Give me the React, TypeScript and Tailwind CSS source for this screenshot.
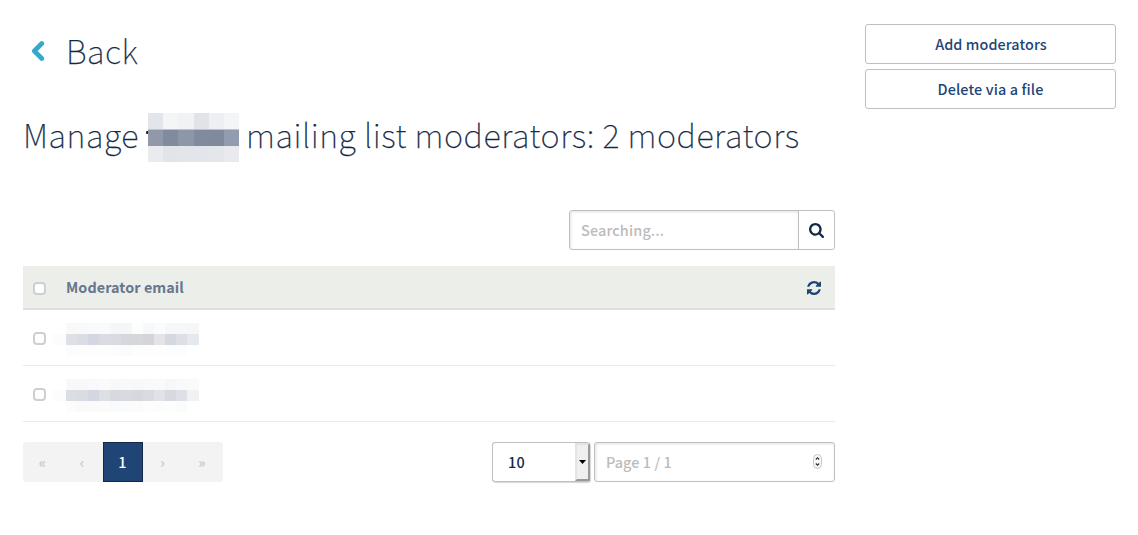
import React from "react";

const headingMosaic = [
  ["#e2e6ea", "#f3f5f7", "#f1f2f5", "#e2e3e8", "#eeeff3", "#f3f5f7"],
  ["#9098a9", "#808b9d", "#8e97a8", "#818b9e", "#808a9c", "#939cae"],
  ["#e9ebef", "#e1e4e9", "#e4e5ea", "#e2e5ea", "#e3e7ea", "#e8eaee"],
];

const rowMosaics = [
  [
    ["#f9f9fa", "#f8f9fa", "#fafafb", "#f9fafb", "#f5f6f8", "#f5f6f8", "#fcfefe", "#f7f8f9", "#fafbfb", "#f6f7f8", "#f6f7f9", "#f5f6f8"],
    ["#dde0e5", "#dadde3", "#d4d7e1", "#d9dce2", "#d9dbe0", "#d5d7db", "#d6d7db", "#d3d5db", "#e3e3e8", "#d5d7e1", "#dcdfe6", "#e5e9ed"],
    ["#fbfdfd", "#fcfefe", "#fdfdfd", "#fcfdfd", "#fafcfd", "#f9fbfd", "#fcfdfd", "#fdfdfd", "#fefefe", "#fcfdfd", "#fcfefe", "#ffffff"],
  ],
  [
    ["#f8f8f9", "#f8f8fa", "#f8f9fa", "#fafafa", "#f7f8fa", "#f9f9fa", "#f7f8f9", "#f8f9fa", "#fafafa", "#f6f7f9", "#f8f9fa", "#fafafb"],
    ["#dadde2", "#d9dce2", "#d4d7e1", "#dcdfe4", "#d6d9de", "#d8dadf", "#d6d8dc", "#d9dbe0", "#e1e2e8", "#d6d9df", "#dde0e7", "#f0f1f3"],
    ["#fcfcfc", "#fafafa", "#fafafb", "#fbfbfb", "#f9fafb", "#fbfbfc", "#fbfbfb", "#fdfdfd", "#fcfcfd", "#fcfdfd", "#fafbfb", "#ffffff"],
  ],
];

function Checkbox() {
  return <span className="block h-[13px] w-[13px] shrink-0 rounded-[4px] border-2 border-[#cfcfcf] bg-white" />;
}

function Mosaic({ rows }: { rows: string[][] }) {
  return (
    <div className="flex flex-col pt-px">
      {rows.map((row, i) => (
        <div key={i} className="flex h-[11px]">
          <span className={i === 1 ? "w-[14px] bg-[#fcfcfd]" : "w-[14px]"} />
          {row.map((c, j) => (
            <span key={j} className={j % 12 === 11 ? "w-[12px]" : "w-[11px]"} style={{ backgroundColor: c }} />
          ))}
        </div>
      ))}
    </div>
  );
}

function SearchIcon() {
  return (
    <svg viewBox="64 128 1664 1664" className="h-[15px] w-[15px]" fill="#122844">
      <path d="M1216 832q0-185-131.5-316.5t-316.5-131.5-316.5 131.5-131.5 316.5 131.5 316.5 316.5 131.5 316.5-131.5 131.5-316.5zm512 832q0 52-38 90t-90 38q-54 0-90-38l-343-342q-179 124-399 124-143 0-273.5-55.5t-225-150-150-225-55.5-273.5 55.5-273.5 150-225 225-150 273.5-55.5 273.5 55.5 225 150 150 225 55.5 273.5q0 220-124 399l343 343q37 37 37 90z" />
    </svg>
  );
}

function RefreshIcon() {
  return (
    <svg viewBox="0 0 1536 1536" className="mt-[2px] h-[14px] w-[14px]" fill="#1f4577">
      <path d="M1511 928q0 5-1 7-64 268-268 434.5t-478 166.5q-146 0-282.5-55t-243.5-157l-129 129q-19 19-45 19t-45-19-19-45v-448q0-26 19-45t45-19h448q26 0 45 19t19 45-19 45l-137 137q71 66 161 102t187 36q134 0 250-65t186-179q11-17 53-117 8-23 30-23h192q13 0 22.5 9.5t9.5 22.5zm25-800v448q0 26-19 45t-45 19h-448q-26 0-45-19t-19-45 19-45l138-138q-148-137-349-137-134 0-250 65t-186 179q-11 17-53 117-8 23-30 23h-199q-13 0-22.5-9.5t-9.5-22.5v-7q65-268 270-434.5t480-166.5q146 0 284 55.5t245 156.5l130-129q19-19 45-19t45 19 19 45z" />
    </svg>
  );
}

export default function App() {
  return (
    <div className="flex h-[535px] w-[1138px] gap-[30px] bg-white pl-[23px] font-['Noto_Sans_CJK_SC',sans-serif] text-[14.4px] font-medium tracking-[0.06px] text-[#122844]">
      <main className="w-[812px] shrink-0">
        <a className="mt-[30px] flex h-[40px] items-center">
          <svg viewBox="0 0 14 22" className="mt-[2px] ml-[8px] h-[22px] w-[14px]" fill="none" stroke="#33a9cb" strokeWidth="4.6" strokeLinecap="round" strokeLinejoin="round">
            <path d="M10.8 3.5 3.3 11l7.5 7.5" />
          </svg>
          <span className="ml-[21px] text-[32.5px] leading-[40px] font-thin tracking-[0.54px] [-webkit-text-stroke:0.25px_#122844]">Back</span>
        </a>
        <h1 className="mt-[43px] flex h-[49px] items-start text-[32.5px] leading-[42px] font-thin tracking-[0.54px] whitespace-nowrap [-webkit-text-stroke:0.25px_#122844]">
          <span className="w-[123px]">Manage</span>
          <span className="mt-[18px] h-[3px] w-[2px] rounded-l-[1px] bg-[#122844]" />
          <span className="flex w-[91px] flex-col">
            {headingMosaic.map((row, i) => (
              <span key={i} className={i === 1 ? "flex h-[17px] border-t border-[#bcc3cc]" : "flex h-[16px]"}>
                {row.map((c, j) => (
                  <span key={j} className="flex-1" style={{ backgroundColor: c }} />
                ))}
              </span>
            ))}
          </span>
          <span className="ml-[7px]">mailing list moderators: 2 moderators</span>
        </h1>

        <div className="mt-[48px] flex justify-end">
          <div className="flex h-[40px] w-[266px] rounded-[3px] border border-[#bfbfbf]">
            <div className="flex flex-1 items-center pl-[11px] tracking-[0.15px] text-[#bbb] shadow-[inset_1px_1px_3px_#e0e0e8]">Searching...</div>
            <div className="flex w-[36px] items-center justify-center border-l border-[#bfbfbf]">
              <SearchIcon />
            </div>
          </div>
        </div>

        <div className="mt-[16px]">
          <div className="flex h-[44px] items-center border-b-2 border-[#dfdfdf] bg-[#ebeee9] pr-[14px] pl-[10px]">
            <span className="pt-[2px]"><Checkbox /></span>
            <span className="ml-[20px] flex-1 font-bold text-[#67768f]">Moderator email</span>
            <RefreshIcon />
          </div>
          {rowMosaics.map((rows, i) => (
            <div key={i} className="flex h-[56px] items-center gap-[6px] border-b border-[#e9e9e9] pt-[2px] pl-[10px]">
              <Checkbox />
              <Mosaic rows={rows} />
            </div>
          ))}
        </div>

        <div className="mt-[20px] flex h-[40px] justify-between">
          <div className="flex overflow-hidden rounded-[3px] bg-[#f3f3f3] text-center leading-[40px] text-[#c4c4c4]">
            <span className="w-[40px] pr-px">«</span>
            <span className="w-[40px] pr-[2px]">‹</span>
            <span className="w-[40px] border border-[#122844] bg-[#1f4577] pr-px leading-[38px] text-white">1</span>
            <span className="w-[40px] pr-px">›</span>
            <span className="w-[40px] pr-[2px]">»</span>
          </div>
          <div className="flex gap-[4px]">
            <div className="flex w-[98px] items-center justify-between rounded-[3px] border border-r-0 border-[#bfbfbf] pl-[15px] shadow-[1px_1px_1px_#d8d8d8]">
              <span className="tracking-[0.2px]">10</span>
              <span className="flex h-full w-[15px] items-center justify-center border-2 border-t-[#e3e3e3] border-r-[#999] border-b-[#999] border-l-[#e3e3e3] bg-[#efefef]">
                <svg viewBox="0 0 7 4" className="h-[4px] w-[7px] shrink-0" fill="#000"><path d="M0 0h7L3.5 4z" /></svg>
              </span>
            </div>
            <div className="flex w-[241px] items-center justify-between rounded-[3px] border border-[#bfbfbf] pr-[12px] pl-[11px] text-[#bbb] shadow-[inset_1px_1px_3px_#e0e0e8]">
              <span className="tracking-[0.08px]">Page 1 / 1</span>
              <svg viewBox="0 0 9 15" className="mb-[2px] h-[15px] w-[9px]" fill="none">
                <rect x=".5" y=".5" width="8" height="14" rx="4" fill="#f8f8f8" stroke="#c8c8c8" />
                <path d="M2.8 5.5 4.5 3.8l1.7 1.7M2.8 9.5l1.7 1.7 1.7-1.7" stroke="#333" strokeWidth="1.2" />
              </svg>
            </div>
          </div>
        </div>
      </main>

      <aside className="mt-[24px] flex w-[251px] flex-col gap-[5px] text-[#1f4577]">
        <button className="h-[40px] rounded-[3px] border border-[#bfbfbf] bg-white pl-px tracking-[0.08px]">Add moderators</button>
        <button className="h-[40px] rounded-[3px] border border-[#bfbfbf] bg-white tracking-[0.13px]">Delete via a file</button>
      </aside>
    </div>
  );
}
